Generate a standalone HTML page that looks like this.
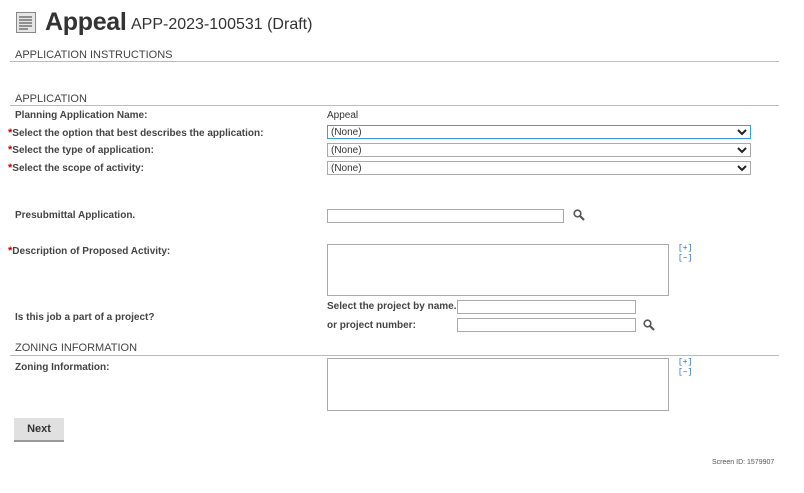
<!DOCTYPE html>
<html><head><style>
body{margin:0;width:804px;height:493px;background:#fff;font-family:"Liberation Sans",sans-serif;position:relative;overflow:hidden;color:#333}
.a{position:absolute;white-space:nowrap}
.lbl{font-size:10px;font-weight:bold;color:#444}
.sec{font-size:11px;color:#444}
.line{position:absolute;left:10px;width:769px;height:1px;background:#bbb}
.sel{position:absolute;left:327px;width:419px;height:12px;border:1px solid #aaa;font-size:10px;line-height:13px;padding-left:3px;box-sizing:content-box}
.sel svg{position:absolute;right:3px;top:3px}
.inp{position:absolute;border:1px solid #aaa;height:12px}
.ta{position:absolute;left:327px;width:340px;border:1px solid #aaa}
.st{color:#c00;font-size:11px;font-weight:bold}
.pm{font-size:8px;color:#2a6ebb;font-family:"Liberation Mono",monospace}
</style></head><body>
<svg class="a" style="left:16px;top:12px" width="20" height="21" viewBox="0 0 20 21"><rect x="0.5" y="0.5" width="19" height="20" fill="#e6e6e6" stroke="#888"/><g stroke="#555" stroke-width="1.2"><line x1="3" y1="5" x2="16" y2="5"/><line x1="3" y1="8" x2="16" y2="8"/><line x1="3" y1="11" x2="16" y2="11"/><line x1="3" y1="14" x2="16" y2="14"/><line x1="3" y1="17" x2="12" y2="17"/></g></svg>
<div class="a" style="left:45px;top:8px;font-size:25px;font-weight:bold;color:#333;letter-spacing:-0.3px">Appeal</div>
<div class="a" style="left:131px;top:16px;font-size:16px;color:#333">APP-2023-100531 (Draft)</div>
<div class="a sec" style="left:15px;top:49px">APPLICATION INSTRUCTIONS</div>
<div class="line" style="top:61px"></div>
<div class="a sec" style="left:15px;top:93px">APPLICATION</div>
<div class="line" style="top:105px"></div>
<div class="a lbl" style="left:15px;top:110px">Planning Application Name:</div>
<div class="a" style="left:327px;top:110px;font-size:10px">Appeal</div>
<div class="a lbl" style="left:8px;top:127px"><span class="st">*</span>Select the option that best describes the application:</div>
<div class="a lbl" style="left:8px;top:144px"><span class="st">*</span>Select the type of application:</div>
<div class="a lbl" style="left:8px;top:162px"><span class="st">*</span>Select the scope of activity:</div>
<div class="sel" style="top:125px;border-color:#3aa0d8">(None)<svg width="10" height="7"><path d="M1 1l4 4 4-4" stroke="#222" stroke-width="2" fill="none"/></svg></div>
<div class="sel" style="top:143px">(None)<svg width="10" height="7"><path d="M1 1l4 4 4-4" stroke="#222" stroke-width="2" fill="none"/></svg></div>
<div class="sel" style="top:161px">(None)<svg width="10" height="7"><path d="M1 1l4 4 4-4" stroke="#222" stroke-width="2" fill="none"/></svg></div>
<div class="a lbl" style="left:15px;top:210px">Presubmittal Application.</div>
<div class="inp" style="left:327px;top:209px;width:235px"></div>
<svg class="a" style="left:573px;top:209px" width="12" height="12"><circle cx="4.5" cy="4.5" r="3.3" stroke="#555" stroke-width="1.6" fill="none"/><line x1="7" y1="7" x2="11" y2="11" stroke="#555" stroke-width="2.2"/></svg>
<div class="a lbl" style="left:8px;top:245px"><span class="st">*</span>Description of Proposed Activity:</div>
<div class="ta" style="top:244px;height:50px"></div>
<div class="a pm" style="left:678px;top:244px">[+]</div>
<div class="a pm" style="left:678px;top:254px">[−]</div>
<div class="a lbl" style="left:15px;top:312px">Is this job a part of a project?</div>
<div class="a lbl" style="left:327px;top:301px">Select the project by name.</div>
<div class="inp" style="left:457px;top:300px;width:177px"></div>
<div class="a lbl" style="left:327px;top:320px">or project number:</div>
<div class="inp" style="left:457px;top:318px;width:177px"></div>
<svg class="a" style="left:643px;top:319px" width="12" height="12"><circle cx="4.5" cy="4.5" r="3.3" stroke="#555" stroke-width="1.6" fill="none"/><line x1="7" y1="7" x2="11" y2="11" stroke="#555" stroke-width="2.2"/></svg>
<div class="a sec" style="left:15px;top:342px">ZONING INFORMATION</div>
<div class="line" style="top:355px"></div>
<div class="a lbl" style="left:15px;top:362px">Zoning Information:</div>
<div class="ta" style="top:358px;height:51px"></div>
<div class="a pm" style="left:678px;top:358px">[+]</div>
<div class="a pm" style="left:678px;top:368px">[−]</div>
<div class="a" style="left:14px;top:418px;width:50px;height:22px;background:#e0e0e0;border-bottom:2px solid #999;font-size:11px;font-weight:bold;text-align:center;line-height:22px;color:#333">Next</div>
<div class="a" style="left:712px;top:459px;font-size:7px;color:#555">Screen ID: 1579907</div>
</body></html>
